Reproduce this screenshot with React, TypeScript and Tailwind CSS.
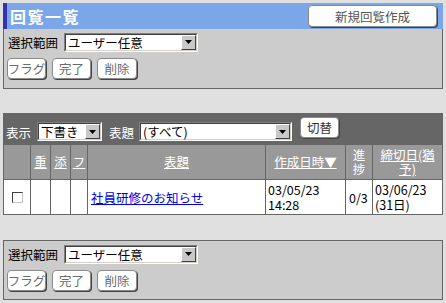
import React from "react";

const FONT = "font-['Noto_Sans_CJK_JP','Noto_Sans',sans-serif]";

const FakeSelect: React.FC<{ text: string; width: string }> = ({ text, width }) => (
  <div
    className={`${width} h-[19px] flex border border-t-[#808080] border-l-[#808080] border-b-white border-r-white`}
  >
    <div className="flex-1 flex items-center bg-white border border-t-[#404040] border-l-[#404040] border-b-[#d4d0c8] border-r-[#d4d0c8] min-w-0">
      <span className="flex-1 pl-[2px] text-[12.5px] leading-[15px] text-black whitespace-nowrap">{text}</span>
      <span className="w-[15px] h-full flex items-center justify-center bg-[#c8c8c8] border border-t-white border-l-white border-b-[#404040] border-r-[#404040]">
        <svg width="7" height="4" viewBox="0 0 7 4">
          <path d="M0 0h7L3.5 4z" fill="#000" />
        </svg>
      </span>
    </div>
  </div>
);

const Btn: React.FC<{ label: string; className?: string; text?: string }> = ({
  label,
  className = "",
  text = "text-[#6a6a6a]",
}) => (
  <div
    className={`h-[21px] flex items-center justify-center whitespace-nowrap bg-white rounded-[4px] border border-[#8a8a8a] shadow-[1px_1px_0_#444] text-[12.5px] leading-[15px] ${text} ${className}`}
  >
    {label}
  </div>
);

const ScopePanel: React.FC<{ top?: boolean }> = ({ top }) => (
  <div
    className={`h-[60px] bg-[#cccccc] border-[#666] ${top ? "border-x border-b" : "border"} pl-[4px] pt-[3px]`}
  >
    <div className="flex items-center h-[20px]">
      <span className="text-[12.5px] leading-[15px] text-black w-[56px] whitespace-nowrap">選択範囲</span>
      <FakeSelect text="ユーザー任意" width="w-[134px]" />
    </div>
    <div className="flex gap-[6px] ml-[-1px] mt-[6px]">
      <Btn label="フラグ" className="w-[39px]" />
      <Btn label="完了" className="w-[39px]" />
      <Btn label="削除" className="w-[40px]" />
    </div>
  </div>
);

const hdr = "bg-[#999999] text-white text-[12.5px] leading-[14px] flex items-center justify-center text-center";

export default function App() {
  return (
    <div className={`w-[446px] h-[303px] bg-[#e0e0e0] px-[3px] pt-[3px] overflow-hidden ${FONT}`}>
      {/* title bar */}
      <div className="h-[26px] flex items-center justify-between bg-[#7ba7e8] border-l-[4px] border-[#3333b0] pl-[3px]">
        <span className="text-white font-bold text-[16px] tracking-[1.5px] leading-[18px]">回覧一覧</span>
        <Btn label="新規回覧作成" className="w-[129px] h-[22px] mr-[6px]" text="text-[#555]" />
      </div>

      <ScopePanel top />

      {/* list table */}
      <div className="mt-[24px] bg-[#666] px-px pb-px">
        <div className="h-[32px] flex items-start pl-[2px] text-white text-[12.5px] leading-[15px] whitespace-nowrap">
          <span className="mt-[12px]">表示</span>
          <div className="mt-[9px] ml-[6px]">
            <FakeSelect text="下書き" width="w-[65px]" />
          </div>
          <span className="mt-[12px] ml-[7px]">表題</span>
          <div className="mt-[9px] ml-[5px]">
            <FakeSelect text="(すべて)" width="w-[153px]" />
          </div>
          <Btn label="切替" className="w-[39px] h-[20px] mt-[4px] ml-[8px]" text="text-[#333]" />
        </div>
        <div className="grid grid-cols-[26px_19px_19px_16px_177px_79px_26px_69px] grid-rows-[34px_34px] gap-px">
          <div className={hdr} />
          <div className={hdr}><span className="underline">重</span></div>
          <div className={hdr}><span className="underline">添</span></div>
          <div className={hdr}><span className="underline">フ</span></div>
          <div className={hdr}><span className="underline">表題</span></div>
          <div className={hdr}><span className="underline whitespace-nowrap">作成日時▼</span></div>
          <div className={hdr}><span>進<br />捗</span></div>
          <div className={hdr}><span className="underline">締切日(猶<br />予)</span></div>

          <div className="bg-white flex items-center justify-center">
            <span className="w-[11px] h-[11px] border border-t-[#404040] border-l-[#404040] border-b-[#c0c0c0] border-r-[#c0c0c0] bg-white" />
          </div>
          <div className="bg-white" />
          <div className="bg-white" />
          <div className="bg-white" />
          <div className="bg-white flex items-center pl-[3px]">
            <a href="#" className="text-[#0000ee] underline text-[12.5px] leading-[15px]">社員研修のお知らせ</a>
          </div>
          <div className="bg-white pl-[2px] pt-[2px] text-[12.5px] leading-[15px] text-black">
            03/05/23<br />14:28
          </div>
          <div className="bg-white flex items-center pl-[3px] text-[12.5px] leading-[15px] text-black">0/3</div>
          <div className="bg-white pl-[2px] pt-[2px] text-[12.5px] leading-[15px] text-black">
            03/06/23<br />(31日)
          </div>
        </div>
      </div>

      <div className="mt-[25px]">
        <ScopePanel />
      </div>
    </div>
  );
}
